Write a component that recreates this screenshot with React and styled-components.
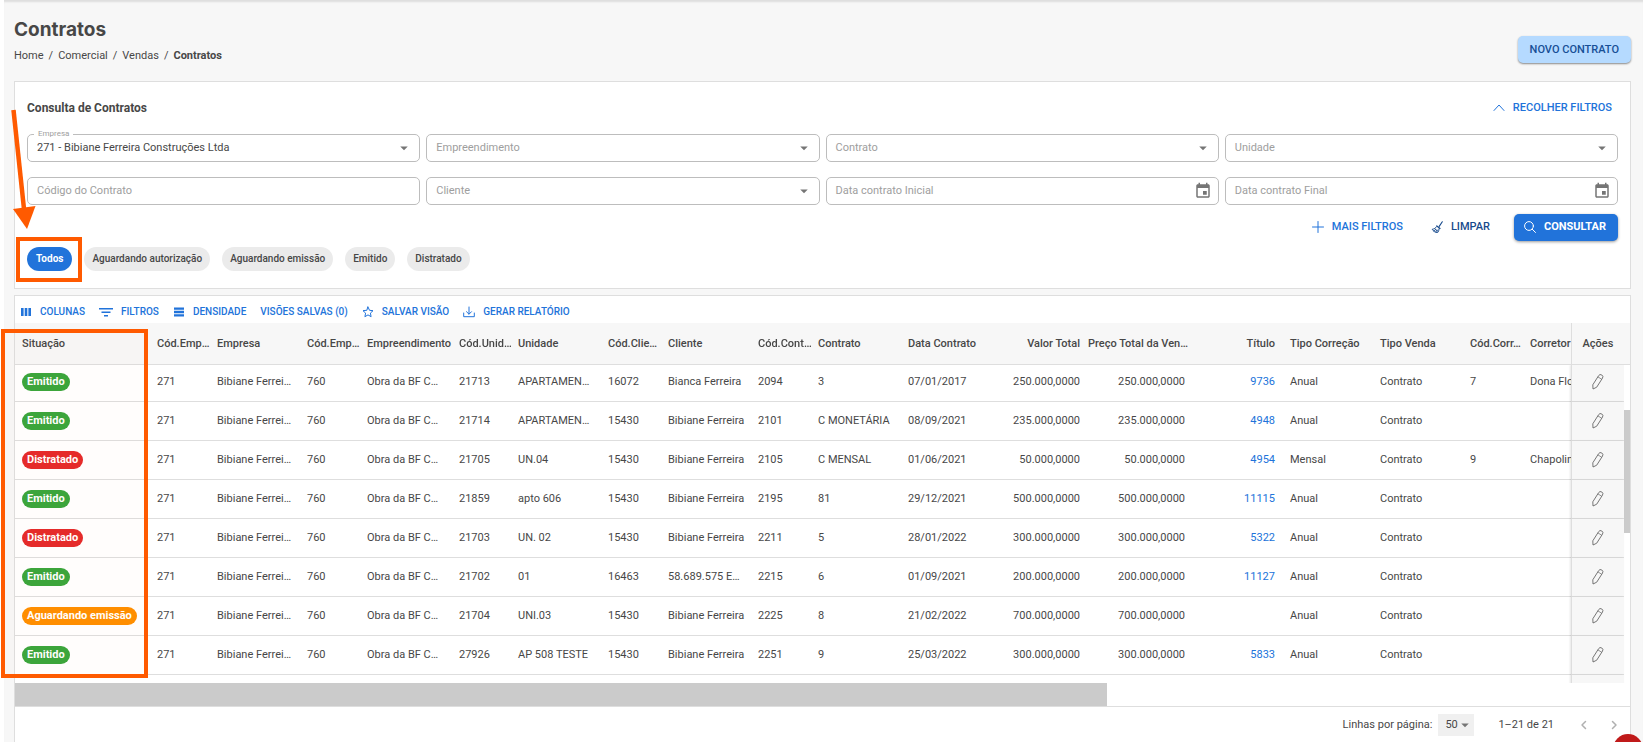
import React from "react";
import styled, { createGlobalStyle } from "styled-components";

const COLUMNS = [
  { key: "situacao", label: "Situação", width: 135 },
  { key: "codEmpresa", label: "Cód.Emp…", width: 60 },
  { key: "empresa", label: "Empresa", width: 90 },
  { key: "codEmp", label: "Cód.Emp…", width: 60 },
  { key: "empreendimento", label: "Empreendimento", width: 92 },
  { key: "codUnidade", label: "Cód.Unid…", width: 59 },
  { key: "unidade", label: "Unidade", width: 90 },
  { key: "codCliente", label: "Cód.Clie…", width: 60 },
  { key: "cliente", label: "Cliente", width: 90 },
  { key: "codContrato", label: "Cód.Cont…", width: 60 },
  { key: "contrato", label: "Contrato", width: 90 },
  { key: "data", label: "Data Contrato", width: 90 },
  { key: "valor", label: "Valor Total", width: 97, align: "right" },
  { key: "preco", label: "Preço Total da Ven…", width: 105, align: "right" },
  { key: "titulo", label: "Título", width: 90, align: "right" },
  { key: "correcao", label: "Tipo Correção", width: 90 },
  { key: "venda", label: "Tipo Venda", width: 90 },
  { key: "codCorretor", label: "Cód.Corr…", width: 60 },
  { key: "corretor", label: "Corretor" },
];

const STATUS_COLORS = {
  Emitido: "#3aa63c",
  Distratado: "#e52b2b",
  "Aguardando emissão": "#ff8f00",
};

const makeRow = (
  situacao,
  codUnidade,
  unidade,
  codCliente,
  cliente,
  codContrato,
  contrato,
  data,
  valor,
  titulo,
  correcao,
  codCorretor = "",
  corretor = ""
) => ({
  situacao,
  codEmpresa: "271",
  empresa: "Bibiane Ferrei…",
  codEmp: "760",
  empreendimento: "Obra da BF C…",
  codUnidade,
  unidade,
  codCliente,
  cliente,
  codContrato,
  contrato,
  data,
  valor,
  preco: valor,
  titulo,
  correcao,
  venda: "Contrato",
  codCorretor,
  corretor,
});

const ROWS = [
  makeRow("Emitido", "21713", "APARTAMEN…", "16072", "Bianca Ferreira", "2094", "3", "07/01/2017", "250.000,0000", "9736", "Anual", "7", "Dona Flo"),
  makeRow("Emitido", "21714", "APARTAMEN…", "15430", "Bibiane Ferreira", "2101", "C MONETÁRIA", "08/09/2021", "235.000,0000", "4948", "Anual"),
  makeRow("Distratado", "21705", "UN.04", "15430", "Bibiane Ferreira", "2105", "C MENSAL", "01/06/2021", "50.000,0000", "4954", "Mensal", "9", "Chapolin"),
  makeRow("Emitido", "21859", "apto 606", "15430", "Bibiane Ferreira", "2195", "81", "29/12/2021", "500.000,0000", "11115", "Anual"),
  makeRow("Distratado", "21703", "UN. 02", "15430", "Bibiane Ferreira", "2211", "5", "28/01/2022", "300.000,0000", "5322", "Anual"),
  makeRow("Emitido", "21702", "01", "16463", "58.689.575 E…", "2215", "6", "01/09/2021", "200.000,0000", "11127", "Anual"),
  makeRow("Aguardando emissão", "21704", "UNI.03", "15430", "Bibiane Ferreira", "2225", "8", "21/02/2022", "700.000,0000", "", "Anual"),
  makeRow("Emitido", "27926", "AP 508 TESTE", "15430", "Bibiane Ferreira", "2251", "9", "25/03/2022", "300.000,0000", "5833", "Anual"),
];

const CHIPS = [
  "Todos",
  "Aguardando autorização",
  "Aguardando emissão",
  "Emitido",
  "Distratado",
];

const CalendarIcon = () => (
  <svg width="18" height="18" viewBox="0 0 24 24" fill="#757575" aria-hidden="true">
    <path d="M17 12h-5v5h5v-5zM16 1v2H8V1H6v2H5c-1.11 0-1.99.9-1.99 2L3 19c0 1.1.89 2 2 2h14c1.1 0 2-.9 2-2V5c0-1.1-.9-2-2-2h-1V1h-2zm3 18H5V8h14v11z" />
  </svg>
);

const CaretIcon = () => (
  <svg width="18" height="18" viewBox="0 0 24 24" fill="#757575" aria-hidden="true">
    <path d="M7 10l5 5 5-5z" />
  </svg>
);

const LineIcon = ({ size = 12, children }) => (
  <svg
    width={size}
    height={size}
    viewBox="0 0 12 12"
    fill="none"
    stroke="currentColor"
    strokeLinecap="round"
    strokeLinejoin="round"
    aria-hidden="true"
  >
    {children}
  </svg>
);

const BroomIcon = () => (
  <LineIcon>
    <path d="M11.3 .8L8.2 5.4" strokeWidth="1.1" />
    <path d="M5.8 5l3.2 2.4" strokeWidth="1.3" />
    <path d="M5.6 5.7C4.5 7.2 3 8 1.2 8.3c1 1.8 3 3.1 5.4 3.3.8-1.2 1.5-2.4 1.6-3.9" />
    <path d="M2.8 9.9l1.6-1.1M4.7 11l1.4-1.9M3.9 7.9l2.9 2.2" strokeWidth=".9" />
  </LineIcon>
);

const PencilIcon = () => (
  <svg
    width="12"
    height="16"
    viewBox="0 0 12 16"
    fill="none"
    stroke="#666"
    strokeWidth=".9"
    strokeLinejoin="round"
    aria-hidden="true"
  >
    <path d="M.8 10.8L6.6 1.700a2.200 2.200 0 0 1 3.900 2.400L4.700 13.200 1 15z" />
    <path d="M5.900 2.900l3.900 2.400" strokeWidth=".7" />
  </svg>
);

const SelectField = ({ id, label, value }) => (
  <Field>
    <FieldLabel htmlFor={id} $floating={Boolean(value)}>
      {label}
    </FieldLabel>
    <Select id={id} defaultValue={value || ""}>
      <option value={value || ""}>{value || ""}</option>
    </Select>
    <FieldIcon>
      <CaretIcon />
    </FieldIcon>
  </Field>
);

const InputField = ({ id, label, calendar }) => (
  <Field>
    <FieldLabel htmlFor={id}>{label}</FieldLabel>
    <Input id={id} type="text" />
    {calendar && (
      <FieldIcon>
        <CalendarIcon />
      </FieldIcon>
    )}
  </Field>
);

const Filters = () => (
  <FilterCard>
    <FilterHeader>
      <h2>Consulta de Contratos</h2>
      <TextButton>
        <LineIcon>
          <path d="M1 8.5l5-5.500 5 5.500" />
        </LineIcon>
        Recolher filtros
      </TextButton>
    </FilterHeader>
    <FieldGrid>
      <SelectField id="empresa" label="Empresa" value="271 - Bibiane Ferreira Construções Ltda" />
      <SelectField id="empreendimento" label="Empreendimento" />
      <SelectField id="contrato" label="Contrato" />
      <SelectField id="unidade" label="Unidade" />
      <InputField id="codigo" label="Código do Contrato" />
      <SelectField id="cliente" label="Cliente" />
      <InputField id="data-inicial" label="Data contrato Inicial" calendar />
      <InputField id="data-final" label="Data contrato Final" calendar />
    </FieldGrid>
    <FilterActions>
      <TextButton>
        <LineIcon>
          <path d="M6 .5v11M.5 6h11" />
        </LineIcon>
        Mais filtros
      </TextButton>
      <TextButton $dark>
        <BroomIcon />
        Limpar
      </TextButton>
      <PrimaryButton>
        <LineIcon>
          <circle cx="5" cy="5" r="4.4" />
          <path d="M8.3 8.3l3.2 3.2" />
        </LineIcon>
        Consultar
      </PrimaryButton>
    </FilterActions>
    <ChipRow>
      {CHIPS.map((chip, index) => (
        <Chip key={chip} $active={index === 0}>
          {chip}
        </Chip>
      ))}
    </ChipRow>
  </FilterCard>
);

const Toolbar = () => (
  <ToolbarWrapper>
    <ToolButton>
      <svg width="12" height="12" viewBox="0 0 12 12" fill="currentColor" aria-hidden="true">
        <path d="M1 2h2.600v8H1zM4.700 2h2.600v8H4.700zM8.400 2H11v8H8.400z" />
      </svg>
      Colunas
    </ToolButton>
    <ToolButton>
      <svg width="14" height="12" viewBox="0 0 14 12" fill="currentColor" aria-hidden="true">
        <path d="M0 2h14v1.500H0zM2.500 5.500h9V7h-9zM5 9h4v1.500H5z" />
      </svg>
      Filtros
    </ToolButton>
    <ToolButton>
      <svg width="12" height="12" viewBox="0 0 12 12" fill="currentColor" aria-hidden="true">
        <path d="M1 1.500h10v2.300H1zM1 4.850h10v2.300H1zM1 8.200h10v2.300H1z" />
      </svg>
      Densidade
    </ToolButton>
    <ToolButton>Visões salvas (0)</ToolButton>
    <ToolButton>
      <LineIcon>
        <path d="M6 1l1.500 3.300 3.500.4-2.600 2.400.7 3.600L6 8.900l-3.100 1.800.7-3.600L1 4.700l3.500-.4z" />
      </LineIcon>
      Salvar visão
    </ToolButton>
    <ToolButton>
      <LineIcon>
        <path d="M.7 7v3.700h10.600V7M6 1v7M3.500 5.700L6 8.200l2.500-2.500" />
      </LineIcon>
      Gerar relatório
    </ToolButton>
  </ToolbarWrapper>
);

const CellContent = ({ column, row }) => {
  const value = row[column.key];
  if (column.key === "situacao") {
    return <Status $color={STATUS_COLORS[value]}>{value}</Status>;
  }
  if (column.key === "titulo" && value) {
    return <a href={`#titulo-${value}`}>{value}</a>;
  }
  return value;
};

const ContractsTable = () => (
  <TableViewport>
    <Table>
      <colgroup>
        {COLUMNS.map(({ key, width }) => (
          <Col key={key} $width={width} />
        ))}
        <Col $width={53} />
        <Col $width={6} />
      </colgroup>
      <thead>
        <tr>
          {COLUMNS.map(({ key, label, align }) => (
            <HeadCell key={key} $align={align}>
              {label}
            </HeadCell>
          ))}
          <ActionsHeadCell>Ações</ActionsHeadCell>
          <GutterHeadCell aria-hidden="true" />
        </tr>
      </thead>
      <tbody>
        {ROWS.map((row, index) => (
          <Row key={row.codContrato}>
            {COLUMNS.map((column) => (
              <Cell key={column.key} $align={column.align}>
                <CellContent column={column} row={row} />
              </Cell>
            ))}
            <ActionsCell>
              <IconButton aria-label={`Editar contrato ${row.codContrato}`}>
                <PencilIcon />
              </IconButton>
            </ActionsCell>
            {index === 0 && (
              <GutterCell rowSpan={ROWS.length + 1} aria-hidden="true">
                <VerticalThumb />
              </GutterCell>
            )}
          </Row>
        ))}
        <Row>
          <Cell colSpan={COLUMNS.length} />
          <ActionsCell />
        </Row>
      </tbody>
    </Table>
  </TableViewport>
);

const Pagination = () => (
  <Footer>
    <label htmlFor="rows-per-page">Linhas por página:</label>
    <PageSize>
      <select id="rows-per-page" defaultValue="50">
        <option>50</option>
      </select>
      <FieldIcon $compact>
        <CaretIcon />
      </FieldIcon>
    </PageSize>
    <PageRange>1–21 de 21</PageRange>
    <PageButton aria-label="Página anterior" disabled>
      <LineIcon>
        <path d="M7.500 2.500L4 6l3.500 3.500" strokeWidth="1.500" />
      </LineIcon>
    </PageButton>
    <PageButton aria-label="Próxima página" disabled>
      <LineIcon>
        <path d="M4.500 2.500L8 6 4.500 9.500" strokeWidth="1.500" />
      </LineIcon>
    </PageButton>
  </Footer>
);

const Annotations = () => (
  <AnnotationLayer width="160" height="690" viewBox="0 0 160 690" aria-hidden="true">
    <path d="M13.500 110L24 209" stroke="#ff5a00" strokeWidth="4.500" />
    <path d="M13 209L35.500 206 27 229z" fill="#ff5a00" />
    <rect x="18" y="239" width="62" height="41" fill="none" stroke="#ff5a00" strokeWidth="4" />
    <rect x="3" y="331" width="143" height="345" fill="#ff5a00" fillOpacity=".01" stroke="#ff5a00" strokeWidth="4" />
  </AnnotationLayer>
);

const App = () => {
  return (
    <>
      <GlobalStyle />
      <Page>
        <PageHeader>
          <div>
            <h1>Contratos</h1>
            <Breadcrumb aria-label="Navegação">
              <a href="#home">Home</a>
              <span>/</span>
              <a href="#comercial">Comercial</a>
              <span>/</span>
              <a href="#vendas">Vendas</a>
              <span>/</span>
              <strong>Contratos</strong>
            </Breadcrumb>
          </div>
          <NewButton>Novo contrato</NewButton>
        </PageHeader>
        <Filters />
        <GridCard>
          <Toolbar />
          <ContractsTable />
          <HorizontalTrack>
            <HorizontalThumb />
          </HorizontalTrack>
          <Pagination />
        </GridCard>
        <HelpButton aria-label="Ajuda" />
      </Page>
      <Annotations />
    </>
  );
};

const GlobalStyle = createGlobalStyle`
  *,
  *::before,
  *::after {
    box-sizing: border-box;
  }

  body {
    margin: 0;
    background: #fff;
    color: #474747;
    font-family: Roboto, "Liberation Sans", sans-serif;
    font-size: 11px;
    line-height: 16px;
  }

  h1,
  h2 {
    margin: 0;
  }

  a {
    color: inherit;
    text-decoration: none;
  }

  button,
  input,
  select {
    padding: 0;
    border: 0;
    background: none;
    color: inherit;
    font: inherit;
  }

  svg {
    display: block;
    flex: none;
  }
`;

const Page = styled.main`
  display: flex;
  flex-direction: column;
  height: 100vh;
  margin-left: 4px;
  padding: 0 12px 0 10px;
  overflow: hidden;
  background: #f7f7f7;
  box-shadow: inset 0 3px 2px -1px #dedede;
`;

const PageHeader = styled.header`
  display: flex;
  align-items: flex-start;
  justify-content: space-between;
  height: 81px;
  padding-top: 18px;

  h1 {
    font-family: Inter, sans-serif;
    font-size: 19px;
    font-weight: 700;
    line-height: 24px;
  }
`;

const Breadcrumb = styled.nav`
  display: flex;
  gap: 5px;
  margin-top: 6px;

  strong {
    font-weight: 700;
  }
`;

const Card = styled.section`
  border: 1px solid #dedede;
  background: #fff;
`;

const BaseButton = styled.button`
  display: inline-flex;
  align-items: center;
  font-weight: 500;
  text-transform: uppercase;
  white-space: nowrap;
  cursor: pointer;
`;

const TextButton = styled(BaseButton)`
  gap: 8px;
  color: ${(p) => (p.$dark ? "#174a8c" : "#2173da")};
`;

const NewButton = styled(BaseButton)`
  height: 27px;
  margin-top: 18px;
  padding: 0 12px;
  border-radius: 5px;
  background: #b5daff;
  color: #174f96;
  box-shadow: 0 1px 2px rgba(0, 0, 0, 0.45);
`;

const PrimaryButton = styled(BaseButton)`
  gap: 8px;
  height: 27px;
  padding: 0 12px 0 10px;
  border-radius: 5px;
  background: #2173da;
  color: #fff;
  font-weight: 700;
  box-shadow: 0 1px 3px rgba(0, 0, 0, 0.4);
`;

const FilterCard = styled(Card)`
  padding: 0 12px 17px;
`;

const FilterHeader = styled.div`
  display: flex;
  align-items: center;
  justify-content: space-between;
  height: 52px;
  padding-right: 6px;

  h2 {
    font-size: 12px;
    font-weight: 700;
  }
`;

const FieldGrid = styled.div`
  display: grid;
  grid-template-columns: repeat(4, 1fr);
  gap: 15px 6px;
`;

const Field = styled.div`
  position: relative;
  height: 28px;
  border: 1px solid #bdbdbd;
  border-radius: 5px;
`;

const FieldLabel = styled.label`
  position: absolute;
  top: ${(p) => (p.$floating ? "-6px" : "5px")};
  left: ${(p) => (p.$floating ? "6px" : "9px")};
  padding: ${(p) => (p.$floating ? "0 4px" : "0")};
  background: #fff;
  color: #9e9e9e;
  font-size: ${(p) => (p.$floating ? "8px" : "11px")};
  line-height: ${(p) => (p.$floating ? "10px" : "16px")};
  pointer-events: none;
`;

const Input = styled.input`
  width: 100%;
  height: 100%;
  padding: 0 9px;
`;

const Select = styled.select`
  width: 100%;
  height: 100%;
  padding: 0 28px 1px 9px;
  appearance: none;
`;

const FieldIcon = styled.span`
  position: absolute;
  top: ${(p) => (p.$compact ? "2px" : "4px")};
  right: ${(p) => (p.$compact ? "0" : "6px")};
  pointer-events: none;
`;

const FilterActions = styled.div`
  display: flex;
  justify-content: flex-end;
  gap: 24px;
  margin-top: 9px;

  ${TextButton}:first-child {
    margin-right: 4px;
  }

  ${TextButton}, ${PrimaryButton} {
    padding-bottom: 2px;
  }
`;

const ChipRow = styled.div`
  display: flex;
  gap: 12px;
  margin-top: 6px;
`;

const Chip = styled.button`
  height: 24px;
  padding: 0 ${(p) => (p.$active ? 9 : 8)}px;
  border-radius: 12px;
  background: ${(p) => (p.$active ? "#2173da" : "#ebebeb")};
  color: ${(p) => (p.$active ? "#fff" : "#474747")};
  font-size: 10px;
  font-weight: ${(p) => (p.$active ? 700 : 500)};
  white-space: nowrap;
`;

const GridCard = styled(Card)`
  display: flex;
  flex: 1;
  flex-direction: column;
  min-height: 0;
  margin-top: 6px;
  border-bottom: 0;
`;

const ToolbarWrapper = styled.div`
  display: flex;
  align-items: center;
  gap: 14px;
  height: 27px;
  flex: none;
  padding: 4px 5px 0;
`;

const ToolButton = styled(BaseButton)`
  gap: 8px;
  color: #2173da;
  font-size: 10px;
`;

const TableViewport = styled.div`
  flex: 1;
  min-height: 0;
  overflow: auto;
  scrollbar-width: none;
`;

const Table = styled.table`
  width: 100%;
  min-width: 1716px;
  border-spacing: 0;
  table-layout: fixed;
`;

const Col = styled.col`
  width: ${(p) => (p.$width ? `${p.$width}px` : "auto")};
`;

const HeadCell = styled.th`
  position: sticky;
  top: 0;
  z-index: 1;
  height: 42px;
  padding: ${(p) => (p.$align === "right" ? "0 8px 0 0" : "0 0 0 7px")};
  border-bottom: 1px solid #dedede;
  background: #f7f7f7;
  font-weight: 500;
  text-align: ${(p) => p.$align || "left"};
  white-space: nowrap;
`;

const ActionsHeadCell = styled(HeadCell)`
  right: 6px;
  z-index: 2;
  padding: 0;
  border-left: 1px solid #dedede;
  text-align: center;
`;

const GutterHeadCell = styled(HeadCell)`
  right: 0;
  z-index: 2;
  padding: 0;
`;

const Cell = styled.td`
  padding: ${(p) => (p.$align === "right" ? "0 8px 0 0" : "0 0 0 7px")};
  border-bottom: 1px solid #dedede;
  text-align: ${(p) => p.$align || "left"};
  white-space: nowrap;

  a {
    color: #2173da;
  }
`;

const Row = styled.tr`
  height: 39px;

  &:first-child {
    height: 37px;
  }

  &:first-child ${Cell} {
    padding-bottom: 2px;
  }
`;

const ActionsCell = styled(Cell)`
  position: sticky;
  right: 6px;
  padding: 0;
  border-left: 1px solid #dedede;
  background: #f7f7f7;
  box-shadow: -1px 0 2px rgba(0, 0, 0, 0.1);
`;

const GutterCell = styled.td`
  position: sticky;
  right: 0;
  padding: 45px 0 0;
  background: #fff;
  vertical-align: top;
`;

const VerticalThumb = styled.div`
  height: 123px;
  background: #cbcbcb;
`;

const Status = styled.span`
  display: inline-block;
  height: 18px;
  padding: 0 5px;
  border-radius: 9px;
  background: ${(p) => p.$color};
  color: #fff;
  font-weight: 700;
  line-height: 17px;
  vertical-align: middle;
`;

const IconButton = styled.button`
  display: block;
  margin: 0 auto;
  cursor: pointer;
`;

const HorizontalTrack = styled.div`
  flex: none;
  height: 24px;
  border-bottom: 1px solid #dedede;
`;

const HorizontalThumb = styled.div`
  width: 67.6%;
  height: 100%;
  background: #cbcbcb;
`;

const Footer = styled.footer`
  display: flex;
  flex: none;
  align-items: center;
  justify-content: flex-end;
  height: 35px;
  padding-right: 10px;
`;

const PageSize = styled.div`
  position: relative;
  margin: 0 24px 0 6px;

  select {
    width: 36px;
    height: 22px;
    padding: 0 0 0 7px;
    background: #f0f0f0;
    appearance: none;
  }
`;

const PageRange = styled.span`
  margin-right: 24px;
`;

const PageButton = styled.button`
  color: #b0b0b0;

  & + & {
    margin-left: 18px;
  }
`;

const AnnotationLayer = styled.svg`
  position: absolute;
  top: 0;
  left: 0;
  z-index: 3;
  pointer-events: none;
`;

const HelpButton = styled.button`
  position: fixed;
  right: 0;
  bottom: -22px;
  width: 30px;
  height: 30px;
  border-radius: 50%;
  background: #c01a1a;
`;

export default App;
